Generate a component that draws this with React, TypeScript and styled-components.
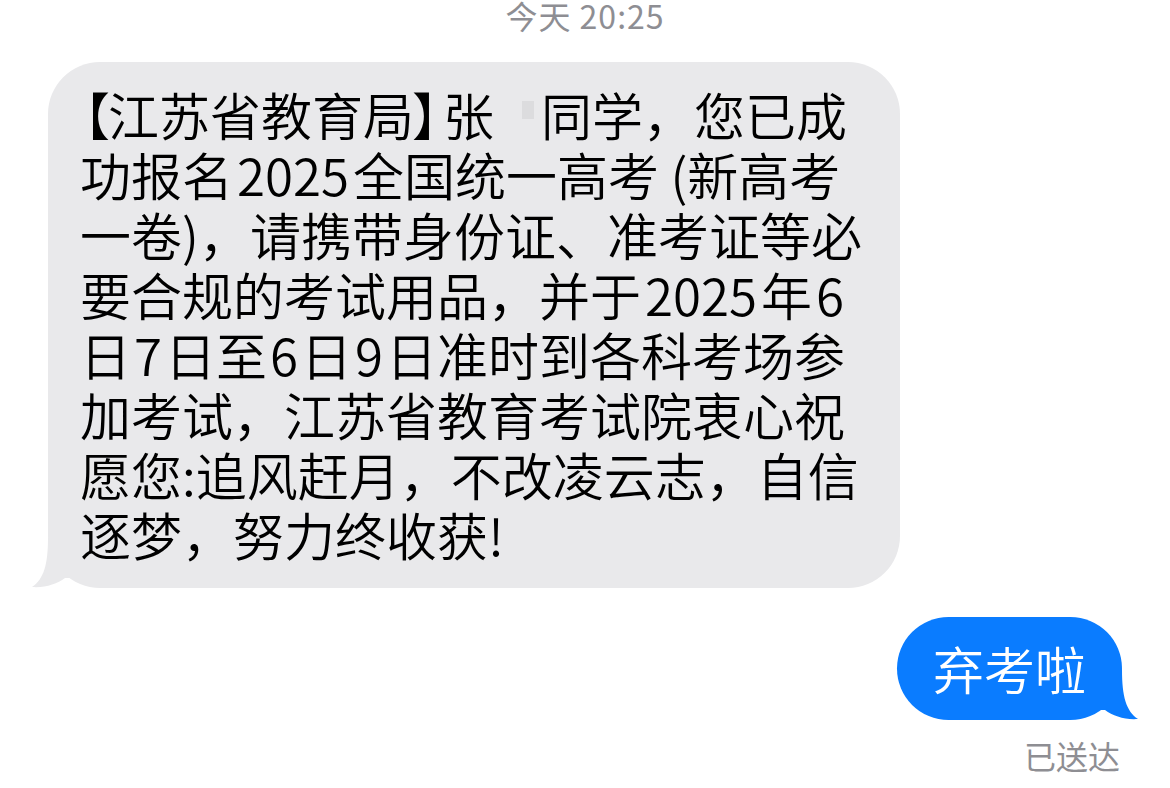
import styled, { createGlobalStyle } from "styled-components";

const GlobalStyle = createGlobalStyle`
    html, body {
        margin: 0;
        padding: 0;
        background: #ffffff;
    }
    body {
        font-family: "Noto Sans CJK SC", "Noto Sans", "Liberation Sans", sans-serif;
    }
`;

const Thread = styled.div`
    width: 1170px;
    height: 788px;
    overflow: hidden;
    display: flex;
    flex-direction: column;
    background: #ffffff;
`;

const Stamp = styled.div`
    text-align: center;
    font-size: 32px;
    letter-spacing: 1px;
    line-height: 36px;
    margin-top: -3px;
    color: #8e8e93;
    height: 65px;
`;

const Bubble = styled.div<{ $mine?: boolean }>`
    position: relative;
    box-sizing: border-box;
    align-self: ${(p) => (p.$mine ? "flex-end" : "flex-start")};
    background: ${(p) => (p.$mine ? "#0a7cff" : "#e9e9eb")};
    color: ${(p) => (p.$mine ? "#ffffff" : "#000000")};
    border-radius: 52px;
    font-size: 51px;
    font-weight: 350;
    line-height: 60px;
    padding: ${(p) => (p.$mine ? "21px 36px 22px" : "22px 20px 24px 32px")};
    margin: ${(p) => (p.$mine ? "29px 48px 0 0" : "0 0 0 48px")};
    width: ${(p) => (p.$mine ? "auto" : "852px")};
`;

const Line = styled.div`
    white-space: nowrap;
`;

const Num = styled.span<{ $gap?: number }>`
    margin: 0 ${(p) => p.$gap ?? 4}px;
`;

const Bracket = styled.span<{ $open?: boolean }>`
    display: inline-block;
    ${(p) => (p.$open ? "margin-left: -21px; margin-right: -2px;" : "margin-left: -2px; margin-right: -20px;")}
`;

const Hidden = styled.span`
    display: inline-block;
    width: 47px;
    height: 44px;
    vertical-align: -6px;
    background: linear-gradient(#dcdcde, #dcdcde) no-repeat 28px 3px / 12px 18px;
`;

const Tail = styled.svg<{ $mine?: boolean }>`
    position: absolute;
    bottom: 0;
    width: 40px;
    height: 50px;
    ${(p) => (p.$mine ? "right: -16px; transform: scaleX(-1);" : "left: -16px;")}
`;

const Status = styled.div`
    align-self: flex-end;
    margin: 16px 50px 0 0;
    font-size: 32px;
    line-height: 38px;
    color: #8e8e93;
`;

const BubbleTail = ({ mine, color }: { mine?: boolean; color: string }) => (
    <Tail $mine={mine} viewBox="0 0 40 50">
        <path d="M16 0 C16 26 12 41 0 49 C13 50 25 46 33 40 L40 40 L40 0 Z" fill={color} />
    </Tail>
);

const App = () => {
    return (
        <Thread>
            <GlobalStyle />
            <Stamp>今天 20:25</Stamp>
            <Bubble>
                <Line>
                    <Bracket $open>【</Bracket>江苏省教育局<Bracket>】</Bracket>张<Hidden />同学，您已成
                </Line>
                <Line>
                    功报名<Num>2025</Num>全国统一高考 (新高考
                </Line>
                <Line>一卷)，请携带身份证、准考证等必</Line>
                <Line>
                    要合规的考试用品，并于<Num>2025</Num>年<Num>6</Num>
                </Line>
                <Line>
                    日<Num $gap={3}>7</Num>日至<Num $gap={3}>6</Num>日<Num $gap={3}>9</Num>日准时到各科考场参
                </Line>
                <Line>加考试，江苏省教育考试院衷心祝</Line>
                <Line>愿您:追风赶月，不改凌云志，自信</Line>
                <Line>逐梦，努力终收获!</Line>
                <BubbleTail color="#e9e9eb" />
            </Bubble>
            <Bubble $mine>
                弃考啦
                <BubbleTail mine color="#0a7cff" />
            </Bubble>
            <Status>已送达</Status>
        </Thread>
    );
};

export default App;
